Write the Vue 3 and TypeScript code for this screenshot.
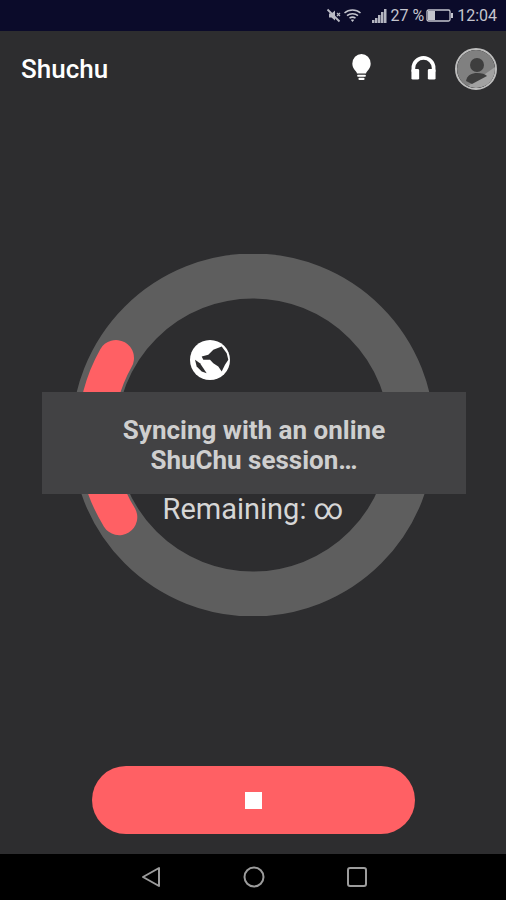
<script setup lang="ts">
const title = 'Shuchu';
const toastLines = ['Syncing with an online', 'ShuChu session…'];
</script>

<template>
  <div class="screen">
    <div class="status-bar">
      <svg class="st-icon" width="17" height="17" viewBox="0 0 17 17">
        <path d="M4 6.500h2.500L10 3.500v10l-3.500-3H4z" fill="#b9bac4" />
        <path d="M2.500 2.500l12 12" stroke="#b9bac4" stroke-width="1.800" />
        <path d="M12 6l3 3m0-3l-3 3" stroke="#b9bac4" stroke-width="1.200" />
      </svg>
      <svg class="st-icon wifi" width="19" height="15" viewBox="0 0 19 15" fill="none" stroke="#c4c5ce" stroke-width="1.500">
        <path d="M1.500 5C6 1 13 1 17.500 5" />
        <path d="M4 7.700c3-2.500 8-2.500 11 0" />
        <path d="M6.500 10.200c1.800-1.300 4.200-1.300 6 0" />
        <path d="M9.500 14l-1.600-2c1-.6 2.200-.6 3.200 0z" fill="#c4c5ce" stroke="none" />
      </svg>
      <svg class="st-icon signal" width="15" height="16" viewBox="0 0 15 16" fill="#b4b5c0">
        <rect x="0" y="12" width="2.500" height="3" />
        <rect x="3" y="10" width="2.500" height="5" />
        <rect x="6" y="7" width="2.500" height="8" />
        <rect x="9" y="4" width="2.500" height="11" />
        <rect x="12" y="1" width="2.500" height="14" />
      </svg>
      <span class="st-text pct">27 %</span>
      <svg class="st-icon battery" width="27" height="13" viewBox="0 0 27 13">
        <rect x="1" y="1" width="23" height="11" rx="1.500" fill="none" stroke="#c4c5ce" stroke-width="1.300" />
        <rect x="2" y="2" width="7" height="9" fill="#c4c5ce" />
        <rect x="25" y="4" width="2" height="5" fill="#c4c5ce" />
      </svg>
      <span class="st-text clock">12:04</span>
    </div>

    <header class="app-bar">
      <span class="title">{{ title }}</span>
      <div class="actions">
        <svg class="bulb" width="21" height="28" viewBox="0 0 24 30" fill="#fff" preserveAspectRatio="none">
          <path d="M12 1a10.500 10.500 0 0 0-10.500 10.500c0 3.600 2 6 4 8 .9.900 1.300 1.700 1.300 2.500h10.400c0-.8.400-1.600 1.300-2.500 2-2 4-4.400 4-8A10.500 10.500 0 0 0 12 1z" />
          <rect x="7" y="23.300" width="10" height="2.200" rx="1" />
          <rect x="8.500" y="26.500" width="7" height="2.500" rx="1.200" />
        </svg>
        <svg class="phones" width="27" height="26" viewBox="0 0 28 26" fill="none">
          <path d="M3.500 17v-4a10.500 10.500 0 0 1 21 0v4" stroke="#fff" stroke-width="3.800" />
          <rect x="1.500" y="14" width="8" height="11" rx="1.500" fill="#fff" />
          <rect x="18.500" y="14" width="8" height="11" rx="1.500" fill="#fff" />
        </svg>
        <div class="avatar">
          <svg width="38" height="38" viewBox="0 0 38 38">
            <circle cx="19" cy="19" r="19" fill="#808080" />
            <path d="M38 17v2a19 19 0 0 1-19 19c-3 0-6-1-8-2z" fill="#a2a2a2" />
            <circle cx="20" cy="15" r="7" fill="#3e3e3e" />
            <path d="M9 31c1-6 6-8 11-8s8 1 10 3l-15 8c-2-1-4-2-6-3z" fill="#3e3e3e" />
          </svg>
        </div>
      </div>
    </header>

    <main class="content">
      <div class="dial">
        <svg class="ring" width="362" height="362" viewBox="0 0 362 362" fill="none">
          <circle cx="181" cy="181" r="159" stroke="#5e5e5e" stroke-width="45" />
          <path d="M44 104A157 157 0 0 0 47.300 263.200" stroke="#ff6064" stroke-width="36" stroke-linecap="round" />
        </svg>
        <div class="dial-body">
          <svg class="globe" width="42" height="42" viewBox="0 0 42 42">
            <circle cx="21" cy="21" r="20" fill="#fff" />
            <path d="M12.700 17.500l6.600-1.700 5-5 8.400-3.300 5 6.700 1.600 6.600-3.300 5-3.300 6.700-3.400-5-5-3.300-3.300-3.400h-6.700z" fill="#2d2d2f" />
            <path d="M6 20.800l5 3.400 6.700 10-5-1.700-5-5z" fill="#2d2d2f" />
          </svg>
          <div class="remaining">Remaining: ∞</div>
        </div>
      </div>

      <div class="toast">
        <div v-for="line in toastLines" :key="line">{{ line }}</div>
      </div>
    </main>

    <div class="footer">
      <button class="stop" type="button"><span class="stop-mark"></span></button>
    </div>

    <nav class="nav-bar">
      <svg width="20" height="22" viewBox="0 0 20 22" fill="none" stroke="#9c9c9c" stroke-width="2" stroke-linejoin="round">
        <path d="M18 2v18L2 11z" />
      </svg>
      <svg width="22" height="22" viewBox="0 0 22 22" fill="none" stroke="#9c9c9c" stroke-width="2">
        <circle cx="11" cy="11" r="9.500" />
      </svg>
      <svg width="20" height="20" viewBox="0 0 20 20" fill="none" stroke="#9c9c9c" stroke-width="2">
        <rect x="1" y="1" width="18" height="18" rx="2" />
      </svg>
    </nav>
  </div>
</template>

<style>
html,
body {
  margin: 0;
  background: #2d2d2f;
}
</style>

<style scoped>
.screen {
  display: flex;
  flex-direction: column;
  width: 506px;
  height: 900px;
  overflow: hidden;
  background: #2d2d2f;
  font-family: Roboto, "Liberation Sans", sans-serif;
}

.status-bar {
  display: flex;
  align-items: center;
  justify-content: flex-end;
  height: 31px;
  padding-right: 9px;
  box-sizing: border-box;
  background: #0b0b2a;
  color: #c4c5ce;
}

.st-icon {
  flex: none;
}

.wifi {
  margin-left: 1px;
}

.signal {
  margin-left: 10px;
}

.st-text {
  font-size: 16px;
}

.pct {
  margin-left: 3px;
}

.battery {
  margin-left: 2px;
}

.clock {
  margin-left: 4px;
}

.app-bar {
  display: flex;
  align-items: center;
  justify-content: space-between;
  height: 76px;
  padding: 0 9px 0 21px;
}

.title {
  color: #fff;
  font-size: 26px;
  font-weight: 500;
}

.actions {
  display: flex;
  align-items: center;
}

.bulb {
  margin-top: -4px;
}

.phones {
  margin-left: 38px;
  margin-top: -2px;
}

.avatar {
  width: 42px;
  height: 42px;
  margin-left: 18px;
  border-radius: 50%;
  border: 2px solid #bdbdbd;
  box-sizing: border-box;
  overflow: hidden;
}

.avatar svg {
  display: block;
}

.content {
  position: relative;
  flex: 1;
  display: flex;
  justify-content: center;
  padding-top: 147px;
}

.dial {
  position: relative;
  width: 362px;
  height: 362px;
  display: flex;
  flex-direction: column;
  align-items: center;
}

.ring {
  position: absolute;
  inset: 0;
}

.dial-body {
  position: relative;
  display: flex;
  flex-direction: column;
  align-items: center;
  padding-top: 85px;
}

.globe {
  margin-left: -86px;
}

.remaining {
  margin-top: 111px;
  color: #d6d6d6;
  font-size: 29px;
  line-height: 34px;
  white-space: nowrap;
}

.toast {
  position: absolute;
  left: 42px;
  top: 285px;
  width: 424px;
  height: 102px;
  display: flex;
  flex-direction: column;
  justify-content: center;
  align-items: center;
  box-sizing: border-box;
  padding-top: 4px;
  background: #424244;
  color: #cfcfcf;
  font-size: 26px;
  font-weight: 700;
  line-height: 30px;
}

.footer {
  display: flex;
  justify-content: center;
  height: 88px;
  padding-left: 1px;
}

.stop {
  display: flex;
  align-items: center;
  justify-content: center;
  width: 323px;
  height: 68px;
  padding: 0;
  border: none;
  border-radius: 34px;
  background: #ff6064;
}

.stop-mark {
  width: 17px;
  height: 17px;
  background: #fff;
}

.nav-bar {
  display: flex;
  align-items: center;
  justify-content: center;
  gap: 82px;
  height: 46px;
  padding-left: 1px;
  background: #000;
}
</style>
